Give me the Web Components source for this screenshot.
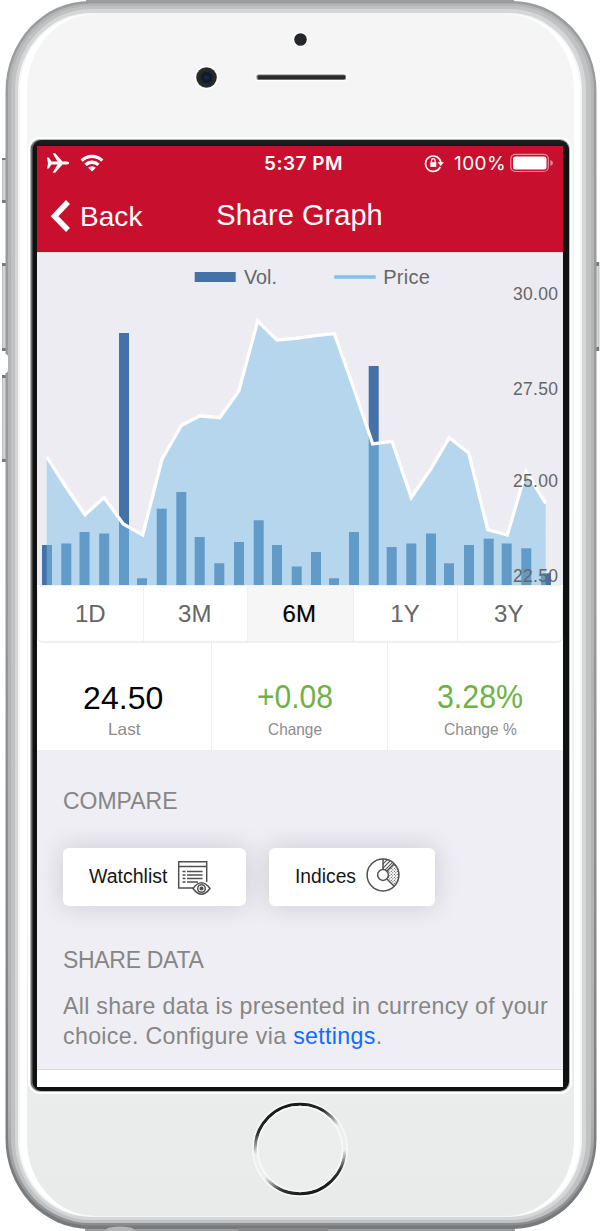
<!DOCTYPE html>
<html lang="en">
<head>
<meta charset="utf-8">
<title>Share Graph</title>
<style>
html,body{margin:0;padding:0;background:#fff;overflow:hidden}
body{width:600px;height:1231px;font-family:"Liberation Sans",Arial,sans-serif}
</style>
</head>
<body>
<phone-frame>
  <status-bar></status-bar>
  <nav-bar></nav-bar>
  <share-chart></share-chart>
  <range-tabs></range-tabs>
  <share-stats></share-stats>
  <compare-panel></compare-panel>
  <share-note></share-note>
</phone-frame>
<script>
const define = (name, html, after) => {
  const tpl = document.createElement('template');
  tpl.innerHTML = html;
  customElements.define(name, class extends HTMLElement {
    constructor() {
      super();
      this.attachShadow({mode: 'open'}).append(tpl.content.cloneNode(true));
    }
    connectedCallback() { if (after) after(this, this.shadowRoot); }
  });
};

/* A one-line label tracked (or squeezed) to a given advance width. */
define('fit-label', `<style>
:host{display:inline-block;white-space:nowrap;flex:none}
span{display:inline-block;transform-origin:0 50%}
</style><span><slot></slot></span>`, (el, root) => {
  const span = root.querySelector('span'), w = parseFloat(el.getAttribute('w'));
  const natural = span.getBoundingClientRect().width;
  if (!w || !natural) return;
  if (el.hasAttribute('squeeze')) span.style.transform = `scaleX(${w / natural})`;
  else span.style.letterSpacing = (w - natural) / el.textContent.length + 'px';
  el.style.width = w + 'px';
});

define('phone-frame', `<style>
:host{display:block;position:relative;isolation:isolate;width:600px;height:1231px;overflow:hidden;box-sizing:border-box;padding:140px 31px}
.body{position:absolute;left:0;top:0;z-index:-1}
.glass{box-sizing:border-box;width:538px;height:951px;background:linear-gradient(#1e2020,#101111 12px);border-radius:9px;padding:6px 6px 4px 6px;box-shadow:inset 1.500px 0 #6b6f6f,0 0 0 1px #b4b6b6,0 0 0 3px #fff}
.screen{height:941px;width:526px;background:#fff;overflow:hidden;display:flex;flex-direction:column}
</style>
<svg class="body" width="600" height="1231" viewBox="0 0 600 1231">
 <defs>
  <linearGradient id="p" x1="0" y1="0" x2="0" y2="1"><stop offset="0" stop-color="#f5f5f5"/><stop offset=".5" stop-color="#f1f3f3"/><stop offset="1" stop-color="#e9ebea"/></linearGradient>
  <linearGradient id="o" x1="0" y1="0" x2="0" y2="1"><stop offset="0" stop-color="#9b9c9e"/><stop offset=".5" stop-color="#98999b"/><stop offset="1" stop-color="#777a7c"/></linearGradient>
  <linearGradient id="m" x1="0" y1="0" x2="0" y2="1"><stop offset="0" stop-color="#b4b5b7"/><stop offset=".9" stop-color="#b2b4b5"/><stop offset="1" stop-color="#8b8d8f"/></linearGradient>
  <linearGradient id="h" gradientUnits="userSpaceOnUse" x1="284" y1="1103" x2="316" y2="1195"><stop offset="0" stop-color="#151515"/><stop offset=".2" stop-color="#2a2a2a"/><stop offset=".4" stop-color="#eee"/><stop offset=".66" stop-color="#eee"/><stop offset=".84" stop-color="#333"/><stop offset="1" stop-color="#111"/></linearGradient>
  <radialGradient id="c"><stop offset="0" stop-color="#1c2b56"/><stop offset=".45" stop-color="#0e1526"/><stop offset=".6" stop-color="#26272a"/><stop offset="1" stop-color="#2a2b2c"/></radialGradient>
 </defs>
 <g fill="#d2d3d3"><path d="M2 158h5v44H2zM2 264h5v86H2zM2 375h5v87H2zM595 262h4v89h-4z"/></g>
 <path d="M2.500 158v44M2.500 264v86M2.500 375v87M599 262v89" stroke="#c0c2c2"/>
 <g fill="#77797b"><path d="M2 158h5v2H2zM2 200h5v3H2zM2 263h5v3H2zM2 348h5v3H2zM2 375h5v3H2zM2 459h5v3H2zM595 262h4v4h-4zM595 347h4v4h-4z"/></g>
 <path d="M86 0H514V3H86zM85 1226H515V1231H85z" fill="#9b9d9e"/>
 <rect x="5.5" y="1" width="591" height="1228" rx="84" ry="90" fill="url(#o)"/>
 <rect x="8" y="3.500" width="586" height="1222" rx="82" ry="87" fill="url(#m)"/>
 <rect x="11" y="6" width="580" height="1217" rx="79" ry="84" fill="#c0c1c2"/>
 <rect x="15" y="9" width="571" height="1211" rx="76" ry="80" fill="#d5d6d6"/>
 <rect x="18" y="13" width="564" height="1204" rx="73" ry="77" fill="#f4f5f5"/>
 <rect x="20" y="14" width="560" height="1202" rx="72" ry="76" fill="#fff"/>
 <rect x="27" y="14" width="547" height="1202" rx="68" ry="76" fill="url(#p)"/>
 <path d="M0 354h5q3 0 3 3v13q0 3-3 3H0z" fill="#fff"/>
 <path d="M238 1228h90v3h-90z" fill="#86888a"/><ellipse cx="120" cy="1230" rx="14" ry="3.500" fill="#b5b6b7"/>
 <circle cx="300.500" cy="39.500" r="7.500" fill="#fff"/><circle cx="300.500" cy="39.500" r="6.300" fill="#24262a"/>
 <circle cx="206.500" cy="77.500" r="12" fill="#fff"/><circle cx="206.500" cy="77.500" r="10.300" fill="url(#c)"/>
 <rect x="255" y="73" width="93" height="8.500" rx="3" fill="#fcfcfc"/><rect x="256.500" y="74.500" width="89.500" height="5.500" rx="2" fill="#70726f"/><rect x="258" y="75.500" width="87" height="3.600" rx="1" fill="#292a29"/>
 <circle cx="300" cy="1149" r="47" fill="none" stroke="#f7f7f7" stroke-width="2"/>
 <circle cx="300" cy="1149" r="44.800" fill="#eceeed" stroke="url(#h)" stroke-width="3"/>
 <circle cx="300" cy="1149" r="42.500" fill="none" stroke="#fafafa" stroke-width="1.500"/>
</svg>
<div class="glass"><div class="screen"><slot></slot></div></div>`);

define('status-bar', `<style>
:host{display:grid;grid-template-columns:1fr auto 1fr;align-items:center;height:34px;flex:none;background:#c8102e;color:#fff;font-family:Inter,sans-serif;font-size:19px;line-height:34px;padding:0 8px 0 9px;box-sizing:border-box}
.l,.r{display:flex;align-items:center}.r{justify-content:flex-end;margin-top:-1px}
.t{font-weight:600;font-size:19px;margin:0 -3px 0 3px}
svg{display:block;flex:none}
</style>
<div class="l">
 <svg width="24" height="22" viewBox="0 0 24 22" fill="#fff" style="margin-top:-2px"><path d="M1 5.500h1.800l2.700 4h6L6.600 1.200h2.600l7.300 8.300h4.600q2.200.2 2.200 1.500t-2.200 1.600h-4.600l-7.300 8.200H6.600l4.900-8.200h-6l-2.700 4H1l1-5z"/></svg>
 <svg width="24" height="18" viewBox="0 0 24 18" style="margin-left:10px;margin-top:-1px" fill="none" stroke="#fff" stroke-width="3.300"><path d="M1.700 6.600a14.600 14.600 0 0 1 20.600 0"/><path d="M5.600 10.900a9.100 9.100 0 0 1 12.800 0"/><path d="M8.200 13.700a5.400 5.400 0 0 1 7.600 0L12 17.500z" fill="#fff" stroke="none"/></svg>
</div>
<fit-label class="t" w="79">5:37 PM</fit-label>
<div class="r">
 <svg width="20" height="20" viewBox="0 0 20 20" fill="none" stroke="#fff" stroke-width="1.700"><path d="M16.300 13.800A7.700 7.700 0 1 1 16.900 10"/><path d="M13.600 9.200h6.300L16.700 13z" fill="#fff" stroke="none"/><path d="M6.300 9.200h6v4.700h-6z" fill="#fff" stroke="none"/><path d="M7.500 9.300V7.500a1.800 1.800 0 0 1 3.600 0v1.800" stroke-width="1.300"/></svg>
 <fit-label w="52" style="margin:2px 0 0 10px">100%</fit-label>
 <svg width="44" height="20" viewBox="0 0 44 20" style="margin-left:4px;margin-right:1px"><rect x=".8" y="1.300" width="37.500" height="17.200" rx="4.500" fill="none" stroke="#e58a98" stroke-width="1.200"/><rect x="3" y="3.500" width="33.500" height="13" rx="2.500" fill="#fff"/><path d="M40.300 7q2.700 1 2.700 3t-2.700 3z" fill="#e58a98"/></svg>
</div>`);

define('nav-bar', `<style>
:host{display:grid;grid-template-columns:1fr auto 1fr;height:72px;flex:none;background:#c8102e;color:#fff;padding:0 0 0 13px;box-sizing:border-box;align-items:start}
.back{display:flex;align-items:center;height:74px;font-size:28px}
.title{font-size:29px;line-height:70px;margin:0 7px 0 -7px}
svg{display:block;margin-top:-3px}
</style>
<div class="back"><svg width="22" height="36" viewBox="0 0 22 36"><path d="M18 4 4.500 18.300 18 32" fill="none" stroke="#fff" stroke-width="5.500"/></svg><fit-label w="62.500" style="margin-left:8px">Back</fit-label></div>
<fit-label class="title" w="166.500">Share Graph</fit-label><span></span>`);

define('share-chart', `<style>
:host{display:block;height:333px;flex:none;background:#edecf2;box-sizing:border-box;border-top:1px solid #dedbe0}
svg{display:block}
text{font-family:"Liberation Sans",Arial,sans-serif;fill:#666}
</style>
<svg width="526" height="332" viewBox="37 253 526 332">
 <rect x="194.700" y="272" width="41" height="10" fill="#4472a8"/>
 <path d="M334.300 277h41.400" stroke="#7fc1e8" stroke-width="3.600"/>
 <text x="244" y="283.500" font-size="20" textLength="33" lengthAdjust="spacingAndGlyphs">Vol.</text>
 <text x="383.300" y="283.500" font-size="20" textLength="46.500">Price</text>
 <g id="bars" fill="#4472a8"></g>
 <polygon id="area" fill="#7fc1e8" fill-opacity=".51"/>
 <polyline id="line" fill="none" stroke="#fff" stroke-width="3.300"/>
 <g id="axis" font-size="17.500"></g>
</svg>`, (el, root) => {
  const price = [[46.7,456.7],[65.7,486.5],[85,514.7],[104,497.5],[123.3,524],[142.700,535],[162,459.300],[181.300,425.500],[200,415.800],[219.700,417.700],[238.700,391.300],[257.700,321],[277,340],[296,338.300],[315,335.700],[334.300,333.500],[353.700,388],[372.700,444],[392,441.300],[411.300,497.500],[430.700,469],[449.300,437.700],[468.700,453],[487.700,529.700],[507.300,535],[526,471.300],[545.700,503.500]];
  const bars = [[42,545],[61.3,543.5],[79.5,532],[99.2,533.5],[119,333],[137,578.3],[156.700,508.700],[176.300,492],[194.700,537],[214.300,563.300],[234,542],[253.700,520.300],[272,545],[291.700,566.500],[311,552],[329,578.300],[349,532],[368.700,366],[386.700,547],[406.300,543.500],[426,533.500],[444,563.300],[464,545],[483.700,538.700],[501.700,543.500],[521.300,548.300],[541,573.300]];
  const pts = price.map(p => p.join(',')).join(' ');
  root.getElementById('bars').innerHTML = bars.map(([x, y]) => `<rect x="${x}" y="${y}" width="10" height="${585 - y}"/>`).join('');
  root.getElementById('area').setAttribute('points', `46.700,585 ${pts} 545.700,585`);
  root.getElementById('line').setAttribute('points', pts);
  root.getElementById('axis').innerHTML = [['30.00',300],['27.50',394.500],['25.00',487],['22.50',581.500]].map(([t, y]) => `<text x="513" y="${y}" textLength="45">${t}</text>`).join('');
});

define('range-tabs', `<style>
:host{display:grid;grid-template-columns:104.500px 104.500px 105.500px 104px 1fr;height:58px;flex:none;box-sizing:border-box;border:1px solid #efefef;border-bottom-width:2px;border-radius:6px;background:#fff;font-size:24px;color:#666;line-height:55px;text-align:center;overflow:hidden}
div+div{border-left:1.500px solid #efefef}
div:last-child{padding-right:2px}
.on{background:#f6f6f6;color:#000;-webkit-text-stroke:.2px #000}
</style><div>1D</div><div style="padding-right:1px">3M</div><div class="on" style="padding-right:2px">6M</div><div>1Y</div><div>3Y</div>`);

define('share-stats', `<style>
:host{display:grid;grid-template-columns:173.500px 176.500px 1fr;height:108px;flex:none;background:#fff;box-sizing:border-box;text-align:center;border-bottom:1px solid #efefef}
div{display:flex;flex-direction:column;align-items:center;padding-top:36px;box-sizing:border-box}
div+div{border-left:1.500px solid #eee;padding-top:35px}
.v{font-size:32px;line-height:38px}.g{color:#6eb245;font-size:33px}
.k{font-size:16.500px;line-height:20px;color:#8c8c8c;margin-top:2px}
div+div .k{margin-top:3px}
</style>
<div style="padding-right:1px"><fit-label class="v" w="80.500">24.50</fit-label><fit-label class="k" w="32.500" squeeze>Last</fit-label></div>
<div style="padding-right:9px"><fit-label class="v g" w="76" squeeze>+0.08</fit-label><fit-label class="k" w="54" squeeze>Change</fit-label></div>
<div style="padding-left:9px"><fit-label class="v g" w="86" squeeze>3.28%</fit-label><fit-label class="k" w="73" squeeze>Change %</fit-label></div>`);

define('compare-panel', `<style>
:host{display:block;height:177px;flex:none;background:#efeef4;padding:36px 26px 0;box-sizing:border-box;color:#868686}
.h{font-size:23px;line-height:28px;display:block}
.row{display:flex;gap:23px;margin-top:33px}
button{font:20px/57px "Liberation Sans",Arial,sans-serif;color:#161616;height:57.500px;border:0;border-radius:6px;background:#fff;padding:0 0 0 26px;display:flex;align-items:center;box-shadow:0 0 26px rgba(70,60,90,.2);box-sizing:border-box}
svg{display:block;flex:none;margin-left:9px}
</style>
<fit-label class="h" w="114.500">COMPARE</fit-label>
<div class="row">
<button style="width:183px"><fit-label w="78.500" squeeze>Watchlist</fit-label>
 <svg width="35" height="36" viewBox="0 0 35 36" fill="none" stroke="#505050" stroke-width="1.500" style="margin-top:3px"><path d="M16 28H1.700V1.700h28V22M1.700 6.600h28"/><path d="M5.500 11.500h3M5.500 15h3M5.500 18.500h3M5.500 22h3M10 11.500h15.500M10 15h15.500M10 18.500h15.500M10 22h11"/><path d="M16 28.500q8.500-11.500 17 0q-8.500 11.500-17 0z" fill="#fff"/><circle cx="24.500" cy="28.500" r="3.800"/><circle cx="24.500" cy="28.500" r="1.300" fill="#505050"/></svg></button>
<button style="width:166px"><fit-label w="61" squeeze>Indices</fit-label>
 <svg width="36" height="36" viewBox="0 0 36 36" fill="none" stroke="#505050" stroke-width="1.500" style="margin-top:-3px">
 <defs><clipPath id="a"><path d="M18 18V2A16 16 0 0 1 29 6.500z"/></clipPath><pattern id="d" width="3" height="3" patternUnits="userSpaceOnUse"><circle cx=".8" cy=".8" r=".62" fill="#505050" stroke="none"/><circle cx="2.300" cy="2.300" r=".62" fill="#505050" stroke="none"/></pattern></defs>
 <path d="M18 18 29.500 6.500A16 16 0 0 1 29.500 29.500z" fill="url(#d)" stroke="none"/>
 <g clip-path="url(#a)" stroke-width="1.200"><path d="M14 11 24 1M14 15 28 1M16 17 31 2M18 19 34 3"/></g>
 <circle cx="18" cy="18" r="15.900"/><path d="M18 2v10M22 14l7.200-7.200M22 22l7.200 7.200"/><circle cx="18" cy="18" r="5.400" fill="#fff"/></svg></button>
</div>`);

define('share-note', `<style>
:host{display:block;height:142px;flex:none;background:#efeef4;padding:18px 0 0 26px;box-sizing:border-box;color:#868686;border-bottom:1.500px solid #dcdbe0;font-size:23px}
.h{line-height:28px;display:block}
.n{line-height:30px;display:block;font-size:23.200px}
.n.first{margin-top:17px}
a{color:#0f6cff}
</style>
<fit-label class="h" w="140.500">SHARE DATA</fit-label>
<fit-label class="n first" w="485">All share data is presented in currency of your</fit-label>
<fit-label class="n" w="319.500">choice. Configure via <a>settings</a>.</fit-label>`);
</script>
</body>
</html>
